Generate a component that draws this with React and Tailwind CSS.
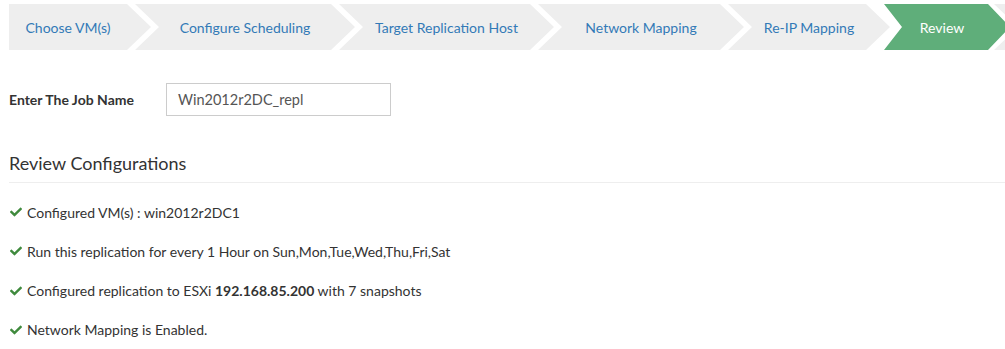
import React from 'react';
import { FaCheck } from 'react-icons/fa';

const steps = [
  { label: 'Choose VM(s)', cls: 'w-[142px] pl-0 pr-[24px] [clip-path:polygon(0_0,calc(100%_-_24px)_0,100%_50%,calc(100%_-_24px)_100%,0_100%)]' },
  { label: 'Configure Scheduling', cls: 'w-[220px]' },
  { label: 'Target Replication Host', cls: 'w-[215px]' },
  { label: 'Network Mapping', cls: 'w-[206px]' },
  { label: 'Re-IP Mapping', cls: 'w-[162px]' },
  {
    label: 'Review',
    active: true,
    cls: 'w-[126px] -ml-[6px] pl-[19px] pr-[29px] [clip-path:polygon(0_0,calc(100%_-_22px)_0,100%_50%,calc(100%_-_22px)_100%,0_100%,18px_50%)]',
  },
  { label: '', cls: 'w-[120px]' },
];

const defaultShape =
  '-ml-[16px] pl-[24px] pr-[24px] [clip-path:polygon(0_0,calc(100%_-_24px)_0,100%_50%,calc(100%_-_24px)_100%,0_100%,24px_50%)]';

const Step = ({ step }) => {
  const shape = step.cls.includes('clip-path') ? step.cls : `${step.cls} ${defaultShape}`;
  const colors = step.active ? 'bg-[#5fae7a] text-white' : 'bg-[#eeeeee] text-[#337ab7]';
  return (
    <div className={`shrink-0 h-[46px] flex items-center justify-center text-[14px] ${shape} ${colors}`}>
      <span className="whitespace-nowrap">{step.label}</span>
    </div>
  );
};

const Item = ({ children }) => (
  <div className="flex items-center h-[20px] mb-[19.3px]">
    <FaCheck className="text-[#3f8a3d] w-[12px] h-[12px] mr-[5px] ml-[1px]" />
    <span>{children}</span>
  </div>
);

export default function App() {
  return (
    <div className="w-[1005px] h-[349px] overflow-hidden bg-white text-[#333] font-['Lato','Open_Sans',sans-serif] text-[14px]">
      {/* Wizard steps */}
      <div className="flex pt-[4px] pl-[9px]">
        {steps.map((s, i) => (
          <Step key={i} step={s} />
        ))}
      </div>

      {/* Job name */}
      <div className="flex items-center mt-[33px] pl-[9px]">
        <label className="font-bold w-[157px] text-[14px]">Enter The Job Name</label>
        <div className="w-[225px] h-[33px] border border-[#cccccc] flex items-center pl-[11px] text-[14.5px] text-[#555]">
          Win2012r2DC_repl
        </div>
      </div>

      {/* Review */}
      <div className="mt-[37px] pl-[9px]">
        <h3 className="text-[18px] leading-[20px] text-[#333] pb-[9px] border-b border-[#eeeeee]">
          Review Configurations
        </h3>
        <div className="mt-[19px] text-[14px]">
          <Item>Configured VM(s) : win2012r2DC1</Item>
          <Item>Run this replication for every 1 Hour on Sun,Mon,Tue,Wed,Thu,Fri,Sat</Item>
          <Item>
            Configured replication to ESXi <b className="font-bold">192.168.85.200</b> with 7 snapshots
          </Item>
          <Item>Network Mapping is Enabled.</Item>
        </div>
      </div>
    </div>
  );
}
